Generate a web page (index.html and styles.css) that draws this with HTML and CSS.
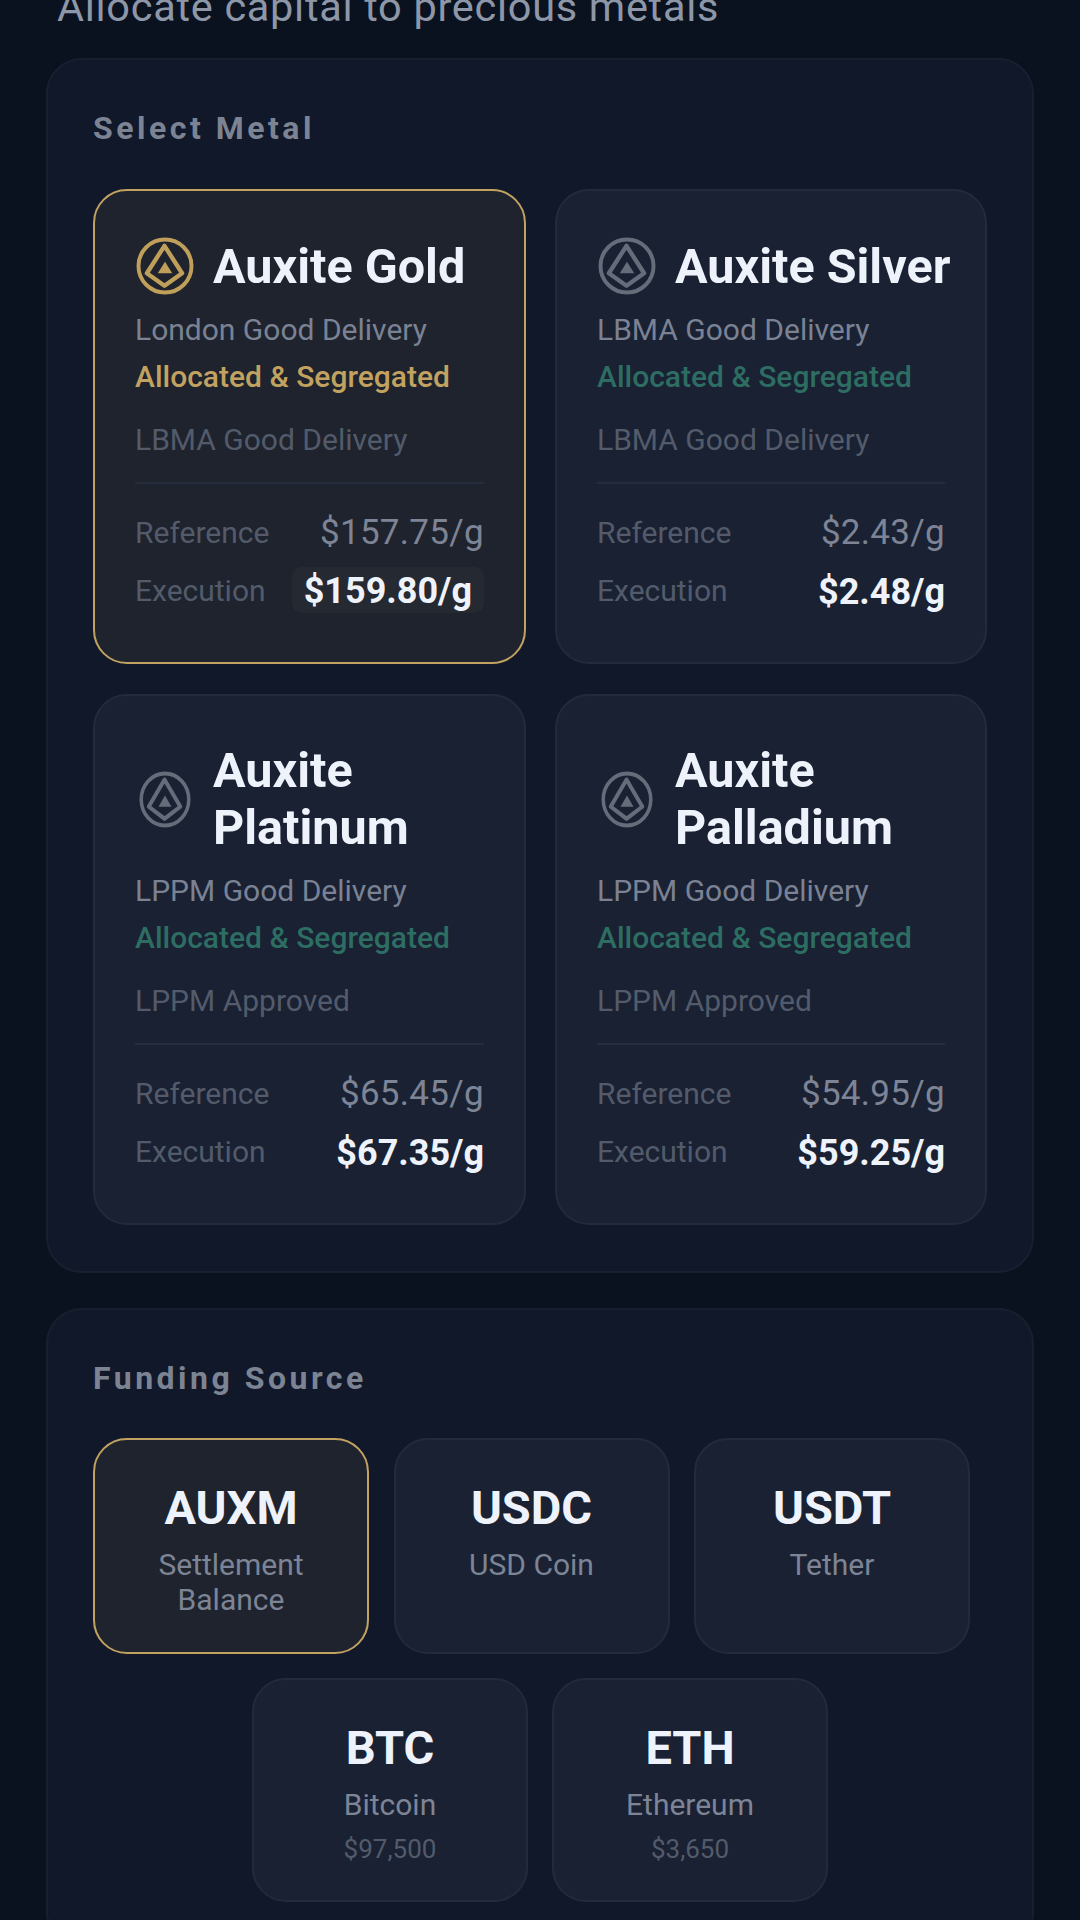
FILE: index.html
```html
<!DOCTYPE html>
<html lang="en">
<head>
<meta charset="utf-8">
<title>Allocate capital</title>
<link rel="stylesheet" href="styles.css">
</head>
<body>
<svg class="defs" width="0" height="0" aria-hidden="true">
  <symbol id="auxite" viewBox="0 0 56 56" preserveAspectRatio="none">
    <circle cx="28" cy="28" r="25.6" fill="none" stroke="currentColor" stroke-width="3.8"/>
    <path d="M27.5 8.5 L44.5 35 L27.5 47 L10.5 35 Z" fill="none" stroke="currentColor" stroke-width="4.2" stroke-linejoin="round"/>
    <path d="M28 24 L35 35 L21 35 Z" fill="currentColor"/>
  </symbol>
</svg>
<main class="page">
  <p class="subtitle">Allocate capital to precious metals</p>

  <section class="panel panel-metal">
    <h2 class="panel-title">Select Metal</h2>
    <div class="metal-grid">
      <article class="metal-card selected">
        <header class="metal-head">
          <svg class="metal-icon gold-icon"><use href="#auxite"/></svg>
          <h3 class="metal-name">Auxite Gold</h3>
        </header>
        <p class="standard">London Good Delivery</p>
        <p class="custody gold-text">Allocated &amp; Segregated</p>
        <p class="accredit">LBMA Good Delivery</p>
        <div class="prices">
          <div class="price-row"><span class="price-label">Reference</span><span class="price-ref">$157.75/g</span></div>
          <div class="price-row"><span class="price-label">Execution</span><span class="price-exec chip">$159.80/g</span></div>
        </div>
      </article>

      <article class="metal-card">
        <header class="metal-head">
          <svg class="metal-icon"><use href="#auxite"/></svg>
          <h3 class="metal-name">Auxite Silver</h3>
        </header>
        <p class="standard">LBMA Good Delivery</p>
        <p class="custody">Allocated &amp; Segregated</p>
        <p class="accredit">LBMA Good Delivery</p>
        <div class="prices">
          <div class="price-row"><span class="price-label">Reference</span><span class="price-ref">$2.43/g</span></div>
          <div class="price-row"><span class="price-label">Execution</span><span class="price-exec">$2.48/g</span></div>
        </div>
      </article>

      <article class="metal-card">
        <header class="metal-head">
          <svg class="metal-icon icon-narrow"><use href="#auxite"/></svg>
          <h3 class="metal-name">Auxite Platinum</h3>
        </header>
        <p class="standard">LPPM Good Delivery</p>
        <p class="custody">Allocated &amp; Segregated</p>
        <p class="accredit">LPPM Approved</p>
        <div class="prices">
          <div class="price-row"><span class="price-label">Reference</span><span class="price-ref">$65.45/g</span></div>
          <div class="price-row"><span class="price-label">Execution</span><span class="price-exec">$67.35/g</span></div>
        </div>
      </article>

      <article class="metal-card">
        <header class="metal-head">
          <svg class="metal-icon icon-narrow"><use href="#auxite"/></svg>
          <h3 class="metal-name">Auxite Palladium</h3>
        </header>
        <p class="standard">LPPM Good Delivery</p>
        <p class="custody">Allocated &amp; Segregated</p>
        <p class="accredit">LPPM Approved</p>
        <div class="prices">
          <div class="price-row"><span class="price-label">Reference</span><span class="price-ref">$54.95/g</span></div>
          <div class="price-row"><span class="price-label">Execution</span><span class="price-exec">$59.25/g</span></div>
        </div>
      </article>
    </div>
  </section>

  <section class="panel panel-funding">
    <h2 class="panel-title">Funding Source</h2>
    <div class="fund-row">
      <article class="fund-card selected"><h3 class="fund-code">AUXM</h3><p class="fund-name">Settlement Balance</p></article>
      <article class="fund-card"><h3 class="fund-code">USDC</h3><p class="fund-name">USD Coin</p></article>
      <article class="fund-card"><h3 class="fund-code">USDT</h3><p class="fund-name">Tether</p></article>
    </div>
    <div class="fund-row fund-row-center">
      <article class="fund-card"><h3 class="fund-code">BTC</h3><p class="fund-name">Bitcoin</p><p class="fund-price">$97,500</p></article>
      <article class="fund-card"><h3 class="fund-code">ETH</h3><p class="fund-name">Ethereum</p><p class="fund-price">$3,650</p></article>
    </div>
  </section>
</main>
</body>
</html>
```

FILE: styles.css
```css
* { box-sizing: border-box; }
html, body { margin: 0; padding: 0; }
body {
  width: 1080px;
  height: 1920px;
  overflow: hidden;
  background: #0a121f;
  color: #eef2fa;
  font-family: Roboto, "Noto Sans", sans-serif;
}
p, h2, h3 { margin: 0; }
.defs { position: absolute; }

.page { padding: 0 46px; }

.subtitle {
  margin: -13px 0 0 11px;
  font-size: 41.5px;
  line-height: 40px;
  letter-spacing: 0.7px;
  color: #8d97a8;
}

.panel {
  background: #111829;
  border: 2px solid #18202f;
  border-radius: 36px;
  padding: 0 45px;
}
.panel-metal { margin-top: 31px; height: 1215px; }
.panel-funding { margin-top: 35px; height: 640px; }

.panel-title {
  padding-top: 51px;
  font-size: 32px;
  line-height: 34px;
  font-weight: 700;
  letter-spacing: 3.5px;
  color: #7c8494;
}

.metal-grid {
  display: grid;
  grid-template-columns: 433px 432px;
  grid-template-rows: 475px 531px;
  gap: 30px 29px;
  margin-top: 44px;
}

.metal-card {
  display: flex;
  flex-direction: column;
  background: #192133;
  border: 2px solid #232b3b;
  border-radius: 34px;
  padding: 0 40px;
}
.metal-card.selected {
  background: #1e232e;
  border-color: #c2a260;
}

.metal-head {
  display: flex;
  align-items: center;
  margin: 46px -14px 0 0;
  gap: 18px;
}
.metal-icon {
  flex: none;
  width: 58px;
  height: 58px;
  margin: 0 1px;
  color: #666c7a;
}
.icon-narrow {
  width: 52px;
  height: 57px;
  margin: 0 4px;
}
.gold-icon { color: #bf9f5a; }

.metal-name {
  font-size: 48.5px;
  line-height: 57px;
  font-weight: 700;
  color: #eef2fa;
}

.standard {
  margin-top: 15px;
  font-size: 30px;
  line-height: 40px;
  color: #7a8293;
}
.custody {
  margin-top: 7px;
  font-size: 30px;
  line-height: 40px;
  font-weight: 500;
  color: #2d6d62;
}
.custody.gold-text { color: #c2a260; }
.accredit {
  margin-top: 23px;
  font-size: 30px;
  line-height: 40px;
  color: #535b6b;
}

.prices {
  margin-top: 22px;
  border-top: 2px solid #252c3c;
  padding-top: 19px;
}
.price-row {
  display: flex;
  justify-content: space-between;
  align-items: center;
  height: 58px;
}
.price-label {
  font-size: 30px;
  color: #535b6b;
}
.price-ref {
  padding-top: 1px;
  font-size: 35px;
  letter-spacing: 0.3px;
  color: #7d8495;
}
.price-exec {
  padding-top: 3px;
  font-size: 36px;
  font-weight: 700;
  color: #eef2fa;
}
.chip {
  background: #252932;
  border-radius: 10px;
  padding: 3px 12px 1px 12px;
}

.fund-row {
  display: flex;
  gap: 24.5px;
  margin-top: 43px;
}
.fund-row-center {
  justify-content: center;
  gap: 24px;
  margin-top: 24px;
}
.fund-card {
  flex: none;
  width: 276px;
  height: 216px;
  padding: 40px 24px 0;
  text-align: center;
  background: #192133;
  border: 2px solid #232b3b;
  border-radius: 34px;
}
.fund-row-center .fund-card { height: 224px; }
.fund-card.selected {
  background: #1e232e;
  border-color: #c2a260;
}
.fund-code {
  font-size: 47px;
  line-height: 56px;
  font-weight: 700;
  color: #eef2fa;
}
.fund-name {
  margin-top: 11px;
  font-size: 30px;
  line-height: 35px;
  color: #7d8495;
}
.fund-price {
  margin-top: 7px;
  font-size: 26px;
  line-height: 40px;
  color: #535b6b;
}
```
